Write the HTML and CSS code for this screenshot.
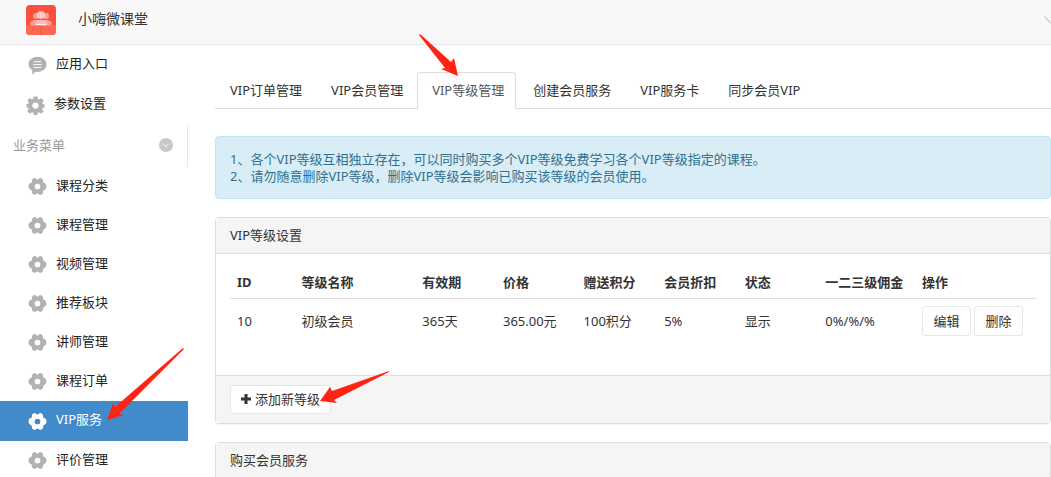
FILE: index.html
```html
<!DOCTYPE html>
<html lang="zh-CN">
<head>
    <meta charset="UTF-8">
    <title>小嗨微课堂</title>
    <link rel="stylesheet" href="styles.css">
</head>
<body>
<svg class="symbols">
    <symbol id="gear" viewBox="0 0 20 20">
        <path fill-rule="evenodd" d="M5 2C6 1 8 .8 8.800 2Q10 3.200 11.200 2C12 .8 14 1 15 2C16 3 16 4 15.800 5Q16 6.200 17.200 6.400C18.800 7 19.400 8.500 19.400 10S18.800 13 17.200 13.600Q16 13.800 15.800 15C16 16 16 17 15 18C14 19 12 19.200 11.200 18Q10 16.800 8.800 18C8 19.200 6 19 5 18C4 17 4 16 4.200 15Q4 13.800 2.800 13.600C1.200 13 .6 11.500 .6 10S1.200 7 2.800 6.400Q4 6.200 4.200 5C4 4 4 3 5 2ZM10 7a3 3 0 1 0 0 6a3 3 0 1 0 0-6Z"/>
    </symbol>
</svg>
<div class="header">
    <svg class="logo" viewBox="0 0 30 30">
        <rect width="30" height="30" rx="4" fill="#f9503f"/>
        <path d="M0 20h30v6a4 4 0 0 1-4 4H4a4 4 0 0 1-4-4Z" fill="#fb6853"/>
        <g fill="#fff" fill-opacity=".45">
            <circle cx="10" cy="11" r="3"/>
            <circle cx="20" cy="11" r="3"/>
            <path d="M4 19c0-3 3-4 6-4h10c3 0 6 1 6 4q-1 1.500-3 1.500H7q-2 0-3-1.500Z"/>
        </g>
        <circle cx="15" cy="10" r="4" fill="#fff" fill-opacity=".6"/>
        <path d="M9 19c0-3 2.500-4 6-4s6 1 6 4Z" fill="#fff" fill-opacity=".3"/>
        <path d="M9.500 19.500h11M15 8v4" fill="none" stroke="#fff" stroke-opacity=".8"/>
        <path d="M6 25h2m2 0h2m6 0h2m2 0h3M15 22v8" fill="none" stroke="#e94a3c" stroke-opacity=".6"/>
    </svg>
    <h1>小嗨微课堂</h1>
    <svg class="more" viewBox="0 0 7 8"><path d="M.5.500L7 7.500"/></svg>
</div>
<div class="wrap">
    <div class="side">
        <ul class="top">
            <li><a href="#">
                <svg class="icon" viewBox="0 0 20 20"><path d="M10 .8c5.400 0 9.500 3.400 9.500 8S15.400 16.800 10 16.800q-1 0-2-.2L4.500 19.800V15C2.200 13.600.5 11.500.5 8.800C.5 4.200 4.600.8 10 .8Z"/><path class="line" d="M6 6h8M5.500 9h9M6 12h8"/></svg>应用入口</a></li>
            <li><a href="#" class="set">
                <svg class="icon" viewBox="0 0 20 20"><path fill-rule="evenodd" d="M8 .5h4l.5 2.700 1.500.6 2.200-1.500 2.500 2.500L17.200 7l.6 1.500 1.700.3v3.400l-1.900.4L17 14l1.500 2.200-2.500 2.500-2.300-1.500-1.400.6-.5 2.200H8.200l-.5-2.300-1.500-.6L4 18.700 1.300 16l1.600-2.200-.6-1.400L.5 12V8.500l2-.4L3 6.800 1.500 4.600 4 2.200l2.200 1.500L7.500 3ZM10 6.800a3.300 3.300 0 1 0 0 6.600a3.300 3.300 0 1 0 0-6.600Z"/></svg>参数设置</a></li>
        </ul>
        <div class="menu-title">
            <span>业务菜单</span>
            <svg class="down" viewBox="0 0 14 14"><circle cx="7" cy="7" r="7"/><path d="M4.500 6L7 8.500L9.500 6"/></svg>
        </div>
        <ul class="menu">
            <li><a href="#"><svg class="icon"><use href="#gear"/></svg>课程分类</a></li>
            <li><a href="#"><svg class="icon"><use href="#gear"/></svg>课程管理</a></li>
            <li><a href="#"><svg class="icon"><use href="#gear"/></svg>视频管理</a></li>
            <li><a href="#"><svg class="icon"><use href="#gear"/></svg>推荐板块</a></li>
            <li><a href="#"><svg class="icon"><use href="#gear"/></svg>讲师管理</a></li>
            <li><a href="#"><svg class="icon"><use href="#gear"/></svg>课程订单</a></li>
            <li class="on"><a href="#"><svg class="icon"><use href="#gear"/></svg>VIP服务</a>
                <svg class="arrow a1" viewBox="0 0 78 73"><path d="M76 0L77 1L12 66L17 67L0 72L6 55L8 59Z"/></svg>
            </li>
            <li><a href="#"><svg class="icon"><use href="#gear"/></svg>评价管理</a></li>
        </ul>
    </div>
    <div class="main">
        <ul class="tabs">
            <li><a href="#">VIP订单管理</a></li>
            <li><a href="#">VIP会员管理</a></li>
            <li class="on"><a href="#">VIP等级管理</a>
                <svg class="arrow a2" viewBox="0 0 40 43"><path d="M1 0L32 28L35 24L39 42L22 35L26 34L0 1Z"/></svg>
            </li>
            <li><a href="#">创建会员服务</a></li>
            <li><a href="#">VIP服务卡</a></li>
            <li><a href="#">同步会员VIP</a></li>
        </ul>
        <div class="alert">
            <p>1、各个VIP等级互相独立存在，可以同时购买多个VIP等级免费学习各个VIP等级指定的课程。</p>
            <p>2、请勿随意删除VIP等级，删除VIP等级会影响已购买该等级的会员使用。</p>
        </div>
        <div class="panel">
            <div class="panel-head">VIP等级设置</div>
            <div class="panel-body">
                <table>
                    <thead>
                    <tr>
                        <th class="w8">ID</th>
                        <th class="w15">等级名称</th>
                        <th class="w10">有效期</th>
                        <th class="w10">价格</th>
                        <th class="w10">赠送积分</th>
                        <th class="w10">会员折扣</th>
                        <th class="w10">状态</th>
                        <th class="w12">一二三级佣金</th>
                        <th class="w15">操作</th>
                    </tr>
                    </thead>
                    <tbody>
                    <tr>
                        <td>10</td>
                        <td>初级会员</td>
                        <td>365天</td>
                        <td>365.00元</td>
                        <td>100积分</td>
                        <td>5%</td>
                        <td>显示</td>
                        <td>0%/%/%</td>
                        <td><div class="btns"><button type="button" class="btn">编辑</button><button type="button" class="btn">删除</button></div></td>
                    </tr>
                    </tbody>
                </table>
            </div>
            <div class="panel-foot">
                <button type="button" class="btn add"><svg class="plus" viewBox="0 0 10 10"><path d="M5 0v10M0 5h10"/></svg>添加新等级</button>
                <svg class="arrow a3" viewBox="0 0 70 33"><path d="M69 0V1L14 29L17 32L0 30L10 16L12 20Z"/></svg>
            </div>
        </div>
        <div class="panel">
            <div class="panel-head">购买会员服务</div>
        </div>
    </div>
</div>
</body>
</html>
```
FILE: styles.css
```css
*{
    margin:0;
    padding:0;
    box-sizing: border-box;
    list-style: none;
}
html,body{
    height: 100%;
    overflow: hidden;
}
body,button{
    font-family: "Noto Sans","Noto Sans CJK SC",sans-serif;
    font-size: 13px;
    line-height: 17px;
    color: #333;
}
body{
    background: #fff;
}
a{
    color: #333;
    text-decoration: none;
}
.symbols{
    display: none;
}
.header{
    height: 45px;
    display: flex;
    align-items: center;
    padding-left: 26px;
    padding-bottom: 4px;
    background: #f8f8f8;
    border-bottom: 1px solid #e7e7e7;
}
.logo{
    width: 30px;
    height: 30px;
    margin-right: 22px;
}
.header h1{
    flex: 1;
    font-size: 14px;
    font-weight: normal;
    line-height: 20px;
    padding-bottom: 2px;
}
.more{
    width: 7px;
    height: 8px;
    fill: none;
    stroke: #aaa;
}
.wrap{
    display: flex;
}
/*左侧菜单*/
.side{
    width: 188px;
    flex: none;
}
.side a{
    display: flex;
    align-items: center;
    height: 100%;
    padding-left: 28px;
    color: #222;
}
.side .set{
    padding-left: 26px;
}
.icon{
    width: 19px;
    height: 19px;
    margin-top: 3px;
    margin-right: 9px;
    fill: #b2b2b2;
}
.icon .line{
    fill: none;
    stroke: #fff;
}
.top li{
    height: 40px;
    padding-bottom: 3px;
}
.menu-title{
    display: flex;
    align-items: center;
    justify-content: space-between;
    height: 42px;
    padding: 0 14px 2px 13px;
    border-right: 1px solid #e7e7e7;
    color: #999;
}
.down{
    width: 14px;
    height: 14px;
    fill: #c8c8c8;
}
.down path{
    fill: none;
    stroke: #fff;
}
.menu li{
    height: 39px;
    padding-bottom: 3px;
    position: relative;
}
.menu .on{
    height: 40px;
    background: #428bca;
}
.menu .on a{
    color: #fff;
}
.menu .on .icon{
    fill: #fff;
}
/*右侧内容*/
.main{
    flex: 1;
    padding: 27px 0 0 27px;
}
.tabs{
    display: flex;
    gap: 2px;
    height: 37px;
    border-bottom: 1px solid #ddd;
    margin-bottom: 27px;
}
.tabs li{
    height: 37px;
    padding: 9px 11px 9px 14px;
    border: 1px solid transparent;
    border-radius: 4px 4px 0 0;
    position: relative;
}
.tabs .on{
    background: #fff;
    border-color: #ddd;
    border-bottom-color: #fff;
}
.tabs .on a{
    color: #555;
}
.alert{
    padding: 14px 14px 13px;
    margin-bottom: 18px;
    border: 1px solid #bce8f1;
    border-radius: 4px;
    background: #d9edf7;
    color: #31708f;
}
.panel{
    margin-bottom: 18px;
    border: 1px solid #ddd;
    border-radius: 4px;
    box-shadow: 0 1px 1px rgba(0,0,0,.05);
}
.panel-head{
    padding: 9px 14px;
    border-bottom: 1px solid #ddd;
    background: #f5f5f5;
}
.panel-body{
    padding: 12px 14px 32px;
}
table{
    width: 100%;
    table-layout: fixed;
    border-collapse: collapse;
}
th,td{
    padding: 7px;
    text-align: left;
    white-space: nowrap;
}
th{
    padding-top: 8px;
    border-bottom: 1px solid #ddd;
}
.w8{
    width: 8%;
}
.w10{
    width: 10%;
}
.w12{
    width: 12%;
}
.w15{
    width: 15%;
}
.btns{
    display: flex;
    gap: 3px;
}
.btn{
    height: 30px;
    min-width: 49px;
    padding: 0 10px;
    border: 1px solid #e7e7e7;
    border-radius: 3px;
    background: #fff;
}
.panel-foot{
    padding: 9px 14px;
    border-top: 1px solid #ddd;
    background: #f5f5f5;
    position: relative;
}
.add{
    display: flex;
    align-items: center;
    height: 29px;
    padding-bottom: 1px;
}
.plus{
    width: 10px;
    height: 10px;
    margin-right: 4px;
    fill: none;
    stroke: #333;
    stroke-width: 3;
}
/*红色箭头*/
.arrow{
    position: absolute;
    z-index: 10;
    fill: #ff2314;
}
.a1{
    width: 78px;
    height: 73px;
    left: 107px;
    top: -53px;
}
.a2{
    width: 40px;
    height: 43px;
    left: 1px;
    top: -39px;
}
.a3{
    width: 70px;
    height: 33px;
    left: 104px;
    top: -5px;
}
```
